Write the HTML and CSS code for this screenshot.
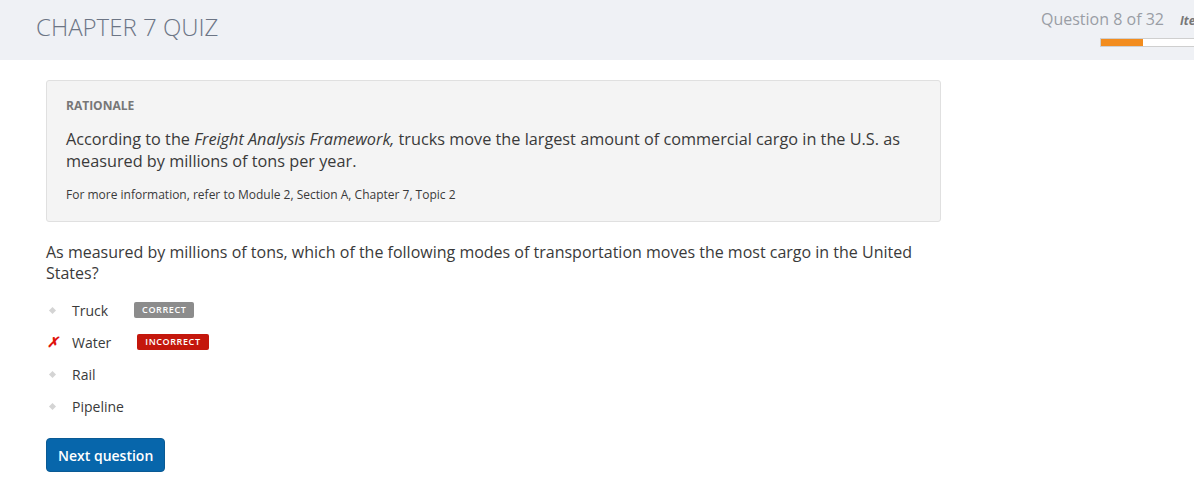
FILE: index.html
```html
<!DOCTYPE html>
<html>
<head>
<meta charset="utf-8">
<link rel="stylesheet" href="styles.css">
</head>
<body>
<header class="top">
  <h1 class="title">CHAPTER 7 QUIZ</h1>
  <div class="status">
    <div class="status-row">
      <span class="qcount">Question 8 of 32</span>
      <span class="items">Items</span>
    </div>
    <div class="progress"><div class="fill" style="width:42px"></div></div>
  </div>
</header>
<main class="content">
  <section class="rationale">
    <div class="r-label">RATIONALE</div>
    <p class="r-text">According to the <em>Freight Analysis Framework,</em> trucks move the largest amount of commercial cargo in the U.S. as measured by millions of tons per year.</p>
    <p class="r-ref">For more information, refer to Module 2, Section A, Chapter 7, Topic 2</p>
  </section>
  <p class="question">As measured by millions of tons, which of the following modes of transportation moves the most cargo in the United States?</p>
  <ul class="options">
    <li class="opt"><span class="mark"><span class="dot"></span></span><span class="label">Truck</span><span class="badge badge-correct">CORRECT</span></li>
    <li class="opt"><span class="mark"><span class="cross">✗</span></span><span class="label">Water</span><span class="badge badge-incorrect">INCORRECT</span></li>
    <li class="opt"><span class="mark"><span class="dot"></span></span><span class="label">Rail</span></li>
    <li class="opt"><span class="mark"><span class="dot"></span></span><span class="label">Pipeline</span></li>
  </ul>
  <button class="next">Next question</button>
</main>
</body>
</html>
```
FILE: styles.css
```css
* { box-sizing: border-box; }
html, body { margin: 0; padding: 0; }
body {
  font-family: "Open Sans", "Liberation Sans", sans-serif;
  color: #3a3a3a;
  background: #fff;
  width: 1194px;
  overflow: hidden;
}
.top {
  height: 60px;
  background: #eff1f5;
  display: flex;
  justify-content: space-between;
  padding-left: 36px;
}
.title {
  margin: 0;
  padding-top: 10px;
  font-size: 24px;
  font-weight: 300;
  color: #6c7585;
  letter-spacing: 0;
}
.status {
  display: flex;
  flex-direction: column;
  align-items: flex-start;
  padding-top: 8px;
  width: 153px;
  overflow: hidden;
}
.status-row {
  display: flex;
  align-items: baseline;
  white-space: nowrap;
}
.qcount {
  font-size: 16px;
  color: #9a9ea5;
}
.items {
  font-size: 12px;
  font-weight: 700;
  font-style: italic;
  color: #777;
  margin-left: 16px;
}
.progress {
  margin-top: 8px;
  margin-left: 59px;
  width: 120px;
  height: 9px;
  border: 1px solid #cfcfcf;
  background: #fff;
}
.fill { height: 100%; background: #f28c1e; }
.content {
  padding: 20px 0 0 46px;
  width: 941px;
}
.rationale {
  background: #f4f4f4;
  border: 1px solid #e0e0e0;
  border-radius: 3px;
  padding: 17px 20px 18px 19px;
}
.r-label {
  font-size: 12px;
  font-weight: 700;
  color: #777;
  line-height: 16px;
}
.r-text {
  margin: 14px 0 0;
  font-size: 16.25px;
  line-height: 22px;
  color: #3a3a3a;
}
.r-ref {
  margin: 15px 0 0;
  font-size: 12px;
  line-height: 16px;
  color: #3a3a3a;
}
.question {
  margin: 20px 0 0;
  font-size: 16px;
  line-height: 21px;
  color: #3a3a3a;
}
.options {
  list-style: none;
  margin: 10px 0 0;
  padding: 0;
}
.opt {
  display: flex;
  align-items: center;
  height: 32px;
  font-size: 14px;
}
.mark {
  width: 26px;
  display: flex;
  align-items: center;
  justify-content: flex-start;
  padding-left: 1px;
}
.dot {
  width: 5px;
  height: 5px;
  background: #d4d4d4;
  transform: rotate(45deg);
  margin-left: 3px;
}
.cross {
  color: #e0140c;
  font-size: 14px;
  font-weight: 700;
  font-style: italic;
  line-height: 1;
}
.label {
  color: #3a3a3a;
}
.badge {
  display: inline-block;
  font-size: 9px;
  font-weight: 600;
  letter-spacing: 0.6px;
  color: #fff;
  border-radius: 2px;
  height: 16px;
  line-height: 16px;
  padding: 0 8px;
}
.badge-correct { background: #8c8c8c; margin-left: 26px; }
.badge-incorrect { background: #c4170c; margin-left: 26px; }
.next {
  margin-top: 16px;
  font-family: "Open Sans", "Liberation Sans", sans-serif;
  font-size: 14px;
  font-weight: 600;
  color: #fff;
  background: #0766ab;
  border: 1px solid #0a5a94;
  border-radius: 4px;
  height: 34px;
  padding: 0 11px;
}
```
